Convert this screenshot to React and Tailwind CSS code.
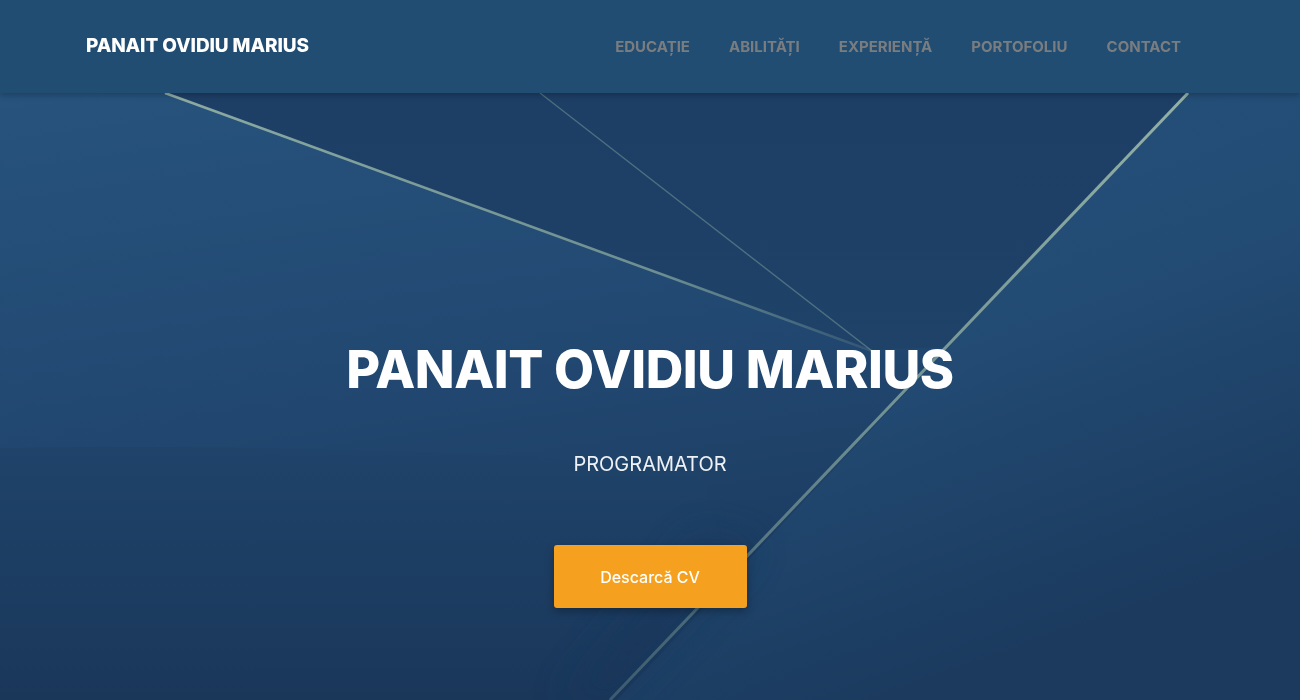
import { Fragment } from "react";

const NAV = ["EDUCAȚIE", "ABILITĂȚI", "EXPERIENȚĂ", "PORTOFOLIU", "CONTACT"];

function HeroBackground() {
  return (
    <svg
      className="absolute inset-0 h-full w-full"
      viewBox="0 0 1300 607"
      preserveAspectRatio="none"
    >
      <defs>
        <linearGradient id="base" x1="0" y1="0" x2="0.3" y2="1">
          <stop offset="0" stopColor="#27537d" />
          <stop offset="0.55" stopColor="#214770" />
          <stop offset="1" stopColor="#1b385b" />
        </linearGradient>
        <linearGradient id="wedge" x1="0" y1="0" x2="0" y2="1">
          <stop offset="0" stopColor="#1d3e65" />
          <stop offset="1" stopColor="#1f4269" />
        </linearGradient>
        <linearGradient id="right" x1="0" y1="0" x2="0.4" y2="1">
          <stop offset="0" stopColor="#25517b" />
          <stop offset="0.5" stopColor="#234c75" />
          <stop offset="1" stopColor="#1b3a5e" />
        </linearGradient>
        <linearGradient id="low" x1="0" y1="0" x2="0" y2="1">
          <stop offset="0" stopColor="#1f436a" />
          <stop offset="1" stopColor="#1a375a" />
        </linearGradient>
        <linearGradient id="fade1" x1="165" y1="0" x2="872" y2="258" gradientUnits="userSpaceOnUse">
          <stop offset="0" stopColor="#9ab7a8" stopOpacity="0.9" />
          <stop offset="0.7" stopColor="#8fae9f" stopOpacity="0.7" />
          <stop offset="1" stopColor="#8fae9f" stopOpacity="0.15" />
        </linearGradient>
        <linearGradient id="fade3" x1="1188" y1="0" x2="610" y2="607" gradientUnits="userSpaceOnUse">
          <stop offset="0" stopColor="#9ab7a8" stopOpacity="0.95" />
          <stop offset="0.5" stopColor="#90afa2" stopOpacity="0.75" />
          <stop offset="1" stopColor="#7f9f98" stopOpacity="0.35" />
        </linearGradient>
        <filter id="soft" x="-5%" y="-5%" width="110%" height="110%">
          <feGaussianBlur stdDeviation="0.7" />
        </filter>
        <filter id="blur" x="-20%" y="-20%" width="140%" height="140%">
          <feGaussianBlur stdDeviation="18" />
        </filter>
      </defs>
      <rect width="1300" height="607" fill="url(#base)" />
      {/* lower band under the soft curve */}
      <path d="M0 355 Q350 350 700 372 L760 607 L0 607 Z" fill="url(#low)" />
      {/* dark wedge between the lines */}
      <polygon points="165,0 1188,0 945,254 870,257" fill="url(#wedge)" />
      {/* lighter plane right of the long line */}
      <polygon points="1188,0 1300,0 1300,607 617,607" fill="url(#right)" />
      {/* soft shade left of the long line, near the button */}
      <polygon points="560,607 615,607 760,455 700,440" fill="#19345a" opacity="0.45" filter="url(#blur)" />
      <g filter="url(#soft)">
        <line x1="165" y1="0" x2="872" y2="258" stroke="url(#fade1)" strokeWidth="2.6" />
        <line x1="540" y1="0" x2="872" y2="258" stroke="#7f9f9a" strokeWidth="1.4" opacity="0.5" />
        <line x1="1188" y1="0" x2="610" y2="607" stroke="url(#fade3)" strokeWidth="3" />
      </g>
    </svg>
  );
}

export default function App() {
  return (
    <div className="min-h-[700px] w-full bg-[#1d3d62] font-['Inter',sans-serif]">
      <nav className="relative z-10 flex h-[93px] items-center justify-between bg-[#224d73] pl-[86px] pr-[119px] shadow-[0_2px_6px_rgba(0,0,0,0.25)]">
        <div className="text-[19px] font-extrabold tracking-[-0.1px] text-white">
          PANAIT OVIDIU MARIUS
        </div>
        <ul className="flex items-center gap-[39px] pt-[2px]">
          {NAV.map((item) => (
            <Fragment key={item}>
              <li className="text-[15px] font-bold text-[#7a7d80]">{item}</li>
            </Fragment>
          ))}
        </ul>
      </nav>

      <section className="relative h-[607px] overflow-hidden">
        <HeroBackground />
        <div className="relative flex flex-col items-center pt-[243px]">
          <h1 className="text-[52px] leading-[68px] font-extrabold tracking-[-0.4px] text-white">
            PANAIT OVIDIU MARIUS
          </h1>
          <p className="mt-[45px] text-[20px] leading-[30px] font-normal text-[#eef1f5]">
            PROGRAMATOR
          </p>
          <button className="mt-[66px] flex h-[63px] w-[193px] items-center justify-center rounded-[3px] bg-[#f5a01e] text-[16px] font-medium text-white shadow-[0_3px_8px_rgba(0,0,0,0.3)]">
            Descarcă CV
          </button>
        </div>
      </section>
    </div>
  );
}
